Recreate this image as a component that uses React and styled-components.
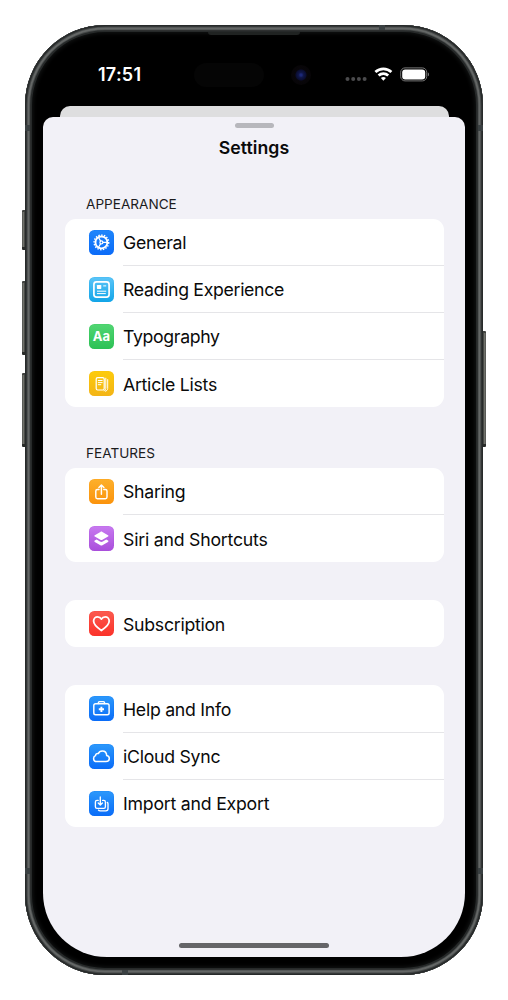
import React from "react";
import styled, { createGlobalStyle } from "styled-components";

const GlobalStyle = createGlobalStyle`
  * { box-sizing: border-box; }
  html, body { margin: 0; background: #fff; }
  body { font-family: Inter, "Liberation Sans", sans-serif; color: #0a0a0a; }
  svg { display: block; }
`;

const Stage = styled.main`
  width: 508px;
  height: 1000px;
  padding: 25px 25px 25px 25px;
  overflow: hidden;
  background: #fff;
`;

const Phone = styled.div`
  position: relative;
  width: 458px;
  height: 950px;
  padding: 18px;
  border-radius: 80px;
  background: #000;
  box-shadow:
    inset 0 0 0 1.6px #272a2a,
    inset 0 0 0 2.6px #444747,
    inset 0 0 0 4.4px #646766,
    inset 0 0 0 5.2px #474a4a,
    inset 0 0 0 7px #262929,
    inset 0 0 4px 8px #141616;
`;

const SideButton = styled.span`
  position: absolute;
  top: ${(p) => p.$top}px;
  ${(p) => p.$side}: -3px;
  width: 3px;
  height: ${(p) => p.$length}px;
  border-radius: ${(p) => (p.$side === "left" ? "1px 0 0 1px" : "0 1px 1px 0")};
  border-top: 2px solid #414340;
  border-bottom: 3px solid #292b29;
  background: linear-gradient(
    to ${(p) => p.$side},
    #343634 0%,
    #777871 55%,
    #484a48 100%
  );
`;

const Band = styled.span`
  position: absolute;
  ${(p) => p.$edge}: 0;
  ${(p) => (p.$vertical ? "left" : "top")}: ${(p) => p.$at}px;
  width: ${(p) => (p.$vertical ? 6 : 5)}px;
  height: ${(p) => (p.$vertical ? 5 : 6)}px;
  background: #3a4042;
`;

const Speaker = styled.span`
  position: absolute;
  top: 7px;
  left: 183px;
  width: 92px;
  height: 3px;
  border-radius: 0 0 3px 3px;
  background: #202322;
`;

const Screen = styled.div`
  display: flex;
  flex-direction: column;
  width: 422px;
  height: 914px;
  border-radius: 64px;
  overflow: hidden;
  background: #000;
`;

const StatusBar = styled.header`
  display: flex;
  align-items: center;
  height: 63px;
  flex: none;
`;

const Clock = styled.time`
  width: 96px;
  padding-left: 55px;
  color: #fff;
  font-size: 18px;
  font-weight: 600;
  letter-spacing: 0.25px;
  line-height: 22px;
  white-space: nowrap;
  flex: none;
`;

const Island = styled.div`
  width: 70px;
  height: 24px;
  margin-left: 55px;
  border-radius: 12px;
  background: #050505;
`;

const Camera = styled.div`
  width: 20px;
  height: 20px;
  margin-left: 27px;
  border-radius: 50%;
  background: radial-gradient(circle, #1c2878 0 1px, #10174a 2.5px, #0a0d30 5px, #08060a 6px, #070507 10px);
`;

const Signals = styled.div`
  display: flex;
  align-items: center;
  margin-left: 34px;
`;

const BackSheet = styled.div`
  flex: none;
  height: 21px;
  margin: 0 16.5px -10px 17px;
  border-radius: 10px 10px 0 0;
  background: #dededf;
`;

const Sheet = styled.section`
  display: flex;
  flex-direction: column;
  flex: 1;
  min-height: 0;
  border-radius: 10px 10px 0 0;
  background: #f2f1f7;
`;

const Grabber = styled.div`
  width: 39px;
  height: 5px;
  margin: 5.5px auto 0;
  border-radius: 3px;
  background: #b7b7bc;
`;

const Title = styled.h1`
  margin: 9px 0 0;
  font-size: 17.7px;
  font-weight: 600;
  line-height: 22px;
  letter-spacing: 0.03px;
  text-align: center;
`;

const List = styled.div`
  display: flex;
  flex-direction: column;
  flex: 1;
  padding: 0 21.5px 0 22px;
`;

const Group = styled.section`
  margin-top: ${(p) => p.$gap}px;
`;

const GroupTitle = styled.h2`
  margin: 0 0 6px 21px;
  font-size: 13.6px;
  font-weight: 400;
  line-height: 18px;
  letter-spacing: 0;
  color: #1b1b1d;
`;

const Card = styled.ul`
  margin: 0;
  padding: 0;
  list-style: none;
  border-radius: 11px;
  background: #fff;
`;

const Row = styled.li`
  display: flex;
  align-items: center;
  height: 47.15px;
  padding-left: 24px;
`;

const Tile = styled.span`
  flex: none;
  width: 25px;
  height: 25px;
  border-radius: 5.5px;
  background: linear-gradient(${(p) => p.$from}, ${(p) => p.$to});
  box-shadow: inset 0 0 0 0.6px ${(p) => p.$to}55;
`;

const Label = styled.span`
  display: flex;
  align-items: center;
  flex: 1;
  height: 100%;
  margin-left: 9px;
  padding-top: 1.5px;
  border-bottom: 1px solid ${(p) => (p.$last ? "transparent" : "#e5e5e8")};
  font-size: 17.7px;
  letter-spacing: ${(p) => p.$tracking ?? -0.27}px;
  white-space: nowrap;
`;

const HomeBar = styled.div`
  flex: none;
  width: 150px;
  height: 5px;
  margin: 0 auto 9px;
  border-radius: 3px;
  background: #656568;
`;

const Glyph = ({ children }) => (
  <svg
    width="25"
    height="25"
    viewBox="0 0 25 25"
    fill="none"
    stroke="#fff"
    strokeWidth="1.45"
    strokeLinecap="round"
    strokeLinejoin="round"
  >
    {children}
  </svg>
);

const icons = {
  gear: (
    <Glyph>
      <circle cx="12.4" cy="12.4" r="7.3" strokeWidth="1.4" strokeDasharray="1.5 1.323" strokeLinecap="butt" />
      <circle cx="12.4" cy="12.4" r="5.9" strokeWidth="1.8" />
      <circle cx="12.4" cy="12.4" r="1.5" strokeWidth="1.2" />
      <path d="M14.1 12.4h4M11.5 10.9 9.4 7.3M11.5 13.9l-2.1 3.6" strokeWidth="1.2" />
    </Glyph>
  ),
  reader: (
    <Glyph>
      <rect x="4.9" y="4.9" width="15.2" height="15.2" rx="2.6" strokeWidth="1.7" />
      <rect x="7.9" y="7.9" width="4.4" height="4" rx=".6" fill="#fff" stroke="none" />
      <path d="M14.6 8.9h2.2M8.4 14.2h8.4M8.4 16.6h8" strokeWidth="1" />
    </Glyph>
  ),
  pages: (
    <Glyph>
      <rect x="7.2" y="6.6" width="8" height="12.4" rx="1.5" strokeWidth="1.2" />
      <path d="M9.3 9.5h3.9M9.3 11.6h3.9M9.3 13.7h2.5" strokeWidth="1" />
      <path d="M16.8 7.2v10.1c0 1.2-.6 2-1.8 2.4M18.7 8.600v8.800c0 1.500-.9 2.500-2.400 2.800" strokeWidth="1" />
    </Glyph>
  ),
  share: (
    <Glyph>
      <path d="M10 10.5H8.400c-1 0-1.600.6-1.600 1.600v6c0 1 .6 1.600 1.600 1.600h8c1 0 1.600-.6 1.600-1.600v-6c0-1-.6-1.600-1.600-1.600h-1.600" />
      <path d="M12.400 15.200V6.300M9.900 8.500l2.500-2.500 2.500 2.500" />
    </Glyph>
  ),
  layers: (
    <Glyph>
      <path d="M11.4 5.9 5.800 9.200c-.6.4-.6 1 0 1.400l5.600 3.200c.7.4 1.300.4 2 0l5.600-3.200c.6-.4.6-1 0-1.400l-5.600-3.300c-.7-.4-1.300-.4-2 0Z" fill="#fff" stroke="none" />
      <path d="m7.600 13.500-1.800 1c-.6.4-.6 1 0 1.400l5.600 3.300c.7.4 1.300.4 2 0l5.600-3.300c.6-.4.6-1 0-1.400l-1.800-1-3.400 2c-.9.5-1.900.5-2.800 0Z" fill="#fff" stroke="none" />
    </Glyph>
  ),
  heart: (
    <Glyph>
      <path d="M12.400 19.500C8 16.600 4.600 13.700 4.600 10.100c0-2.500 1.700-4.300 4-4.300 1.700 0 3 .8 3.800 2.300.8-1.500 2.100-2.300 3.800-2.300 2.300 0 4 1.800 4 4.300 0 3.600-3.400 6.500-7.800 9.400Z" strokeWidth="1.800" />
    </Glyph>
  ),
  kit: (
    <Glyph>
      <rect x="4.800" y="7.800" width="15.300" height="10.900" rx="1.800" />
      <path d="M9.300 7.600V6.900c0-.9.400-1.300 1.300-1.300h3.700c.9 0 1.300.4 1.300 1.300v.7" />
      <path d="M12.400 10.700v5.200M9.800 13.300H15" strokeWidth="1.900" strokeLinecap="butt" />
    </Glyph>
  ),
  cloud: (
    <Glyph>
      <path d="M8 17.600h9c1.900 0 3.300-1.300 3.300-3 0-1.600-1-2.800-2.600-3-.1-2.700-2-4.600-4.400-4.600-1.900 0-3.300.9-4 2.600-1.500-.3-2.700.6-2.800 2-1.200.5-1.900 1.500-1.900 2.800 0 1.800 1.400 3.200 3.400 3.200Z" strokeWidth="1.500" />
    </Glyph>
  ),
  transfer: (
    <Glyph>
      <path d="M9.200 9.400H8c-1 0-1.600.6-1.600 1.600v4.800c0 1 .6 1.600 1.600 1.600h6.800c1 0 1.600-.6 1.600-1.600V11c0-1-.6-1.600-1.600-1.600h-1.200" strokeWidth="1.350" />
      <path d="M11.300 6v7.700M9.200 11.900l2.100 2.100 2.100-2.100" strokeWidth="1.350" />
      <path d="M18.300 11.500c.5.200.7.700.7 1.300v4.900c0 1.400-.7 2.100-2.100 2.100h-5.700c-.8 0-1.400-.2-1.700-.7" strokeWidth="1.350" />
    </Glyph>
  ),
};

const LetterGlyph = styled.span`
  display: block;
  color: #fff;
  font-size: 13px;
  font-weight: 700;
  line-height: 25px;
  letter-spacing: 0;
  text-align: center;
`;
icons.letters = <LetterGlyph>Aa</LetterGlyph>;

const blue = ["#2c99fb", "#0a6cf8"];

const groups = [
  {
    title: "APPEARANCE",
    gap: 36.3,
    rows: [
      { icon: "gear", label: "General", colors: ["#1f86fb", "#0b6bf8"] },
      { icon: "reader", label: "Reading Experience", colors: ["#5cc5f8", "#12a5e8"], tracking: -0.32 },
      { icon: "letters", label: "Typography", colors: ["#52d673", "#2cc155"], tracking: -0.34 },
      { icon: "pages", label: "Article Lists", colors: ["#fdcc0b", "#f3b416"] },
    ],
  },
  {
    title: "FEATURES",
    gap: 36.8,
    rows: [
      { icon: "share", label: "Sharing", colors: ["#fdb02b", "#fb930c"] },
      { icon: "layers", label: "Siri and Shortcuts", colors: ["#c87af0", "#a94edb"], tracking: -0.22 },
    ],
  },
  { gap: 37.8, rows: [{ icon: "heart", label: "Subscription", colors: ["#fb5b50", "#fb3229"] }] },
  {
    gap: 38,
    rows: [
      { icon: "kit", label: "Help and Info", colors: blue },
      { icon: "cloud", label: "iCloud Sync", colors: blue },
      { icon: "transfer", label: "Import and Export", colors: blue, tracking: -0.22 },
    ],
  },
];

const StatusIcons = () => (
  <Signals>
    <svg width="84" height="24" viewBox="0 0 84 24" fill="none">
      <g fill="#4b4b4d">
        <circle cx="2.500" cy="16" r="2" />
        <circle cx="8.200" cy="16" r="2" />
        <circle cx="13.900" cy="16" r="2" />
        <circle cx="19.600" cy="16" r="2" />
      </g>
      <g stroke="#fff" strokeWidth="2.700">
        <path d="M30.400 9.100c4.500-4.300 11.500-4.300 16 0" />
        <path d="M33.600 12.500c2.700-2.600 6.900-2.600 9.600 0" />
      </g>
      <path d="M35.900 14.900c1.400-1.300 3.600-1.300 5 0l-2.500 2.900Z" fill="#fff" />
      <rect x="55.700" y="4.900" width="26" height="13" rx="4.300" stroke="#777" strokeWidth="1" />
      <rect x="57.200" y="6.400" width="23" height="10" rx="3" fill="#fff" />
      <path d="M82.800 9.500c1 .3 1.200.9 1.200 1.900s-.2 1.600-1.200 1.900Z" fill="#777" />
    </svg>
  </Signals>
);

export default function App() {
  return (
    <>
      <GlobalStyle />
      <Stage>
        <Phone>
          <SideButton $side="left" $top={185} $length={40} />
          <SideButton $side="left" $top={256} $length={74} />
          <SideButton $side="left" $top={348} $length={74} />
          <SideButton $side="right" $top={306} $length={116} />
          <Band $edge="left" $at={100} />
          <Band $edge="right" $at={100} />
          <Band $edge="left" $at={843} />
          <Band $edge="right" $at={843} />
          <Band $edge="top" $vertical $at={354} />
          <Band $edge="bottom" $vertical $at={97} />
          <Speaker />
          <Screen>
            <StatusBar>
              <Clock>17:51</Clock>
              <Island />
              <Camera />
              <StatusIcons />
            </StatusBar>
            <BackSheet />
            <Sheet>
              <Grabber />
              <Title>Settings</Title>
              <List>
                {groups.map((group, index) => (
                  <Group key={index} $gap={group.gap}>
                    {group.title && <GroupTitle>{group.title}</GroupTitle>}
                    <Card>
                      {group.rows.map((row, i) => (
                        <Row key={row.label}>
                          <Tile $from={row.colors[0]} $to={row.colors[1]}>
                            {icons[row.icon]}
                          </Tile>
                          <Label $last={i === group.rows.length - 1} $tracking={row.tracking}>
                            {row.label}
                          </Label>
                        </Row>
                      ))}
                    </Card>
                  </Group>
                ))}
              </List>
              <HomeBar />
            </Sheet>
          </Screen>
        </Phone>
      </Stage>
    </>
  );
}
